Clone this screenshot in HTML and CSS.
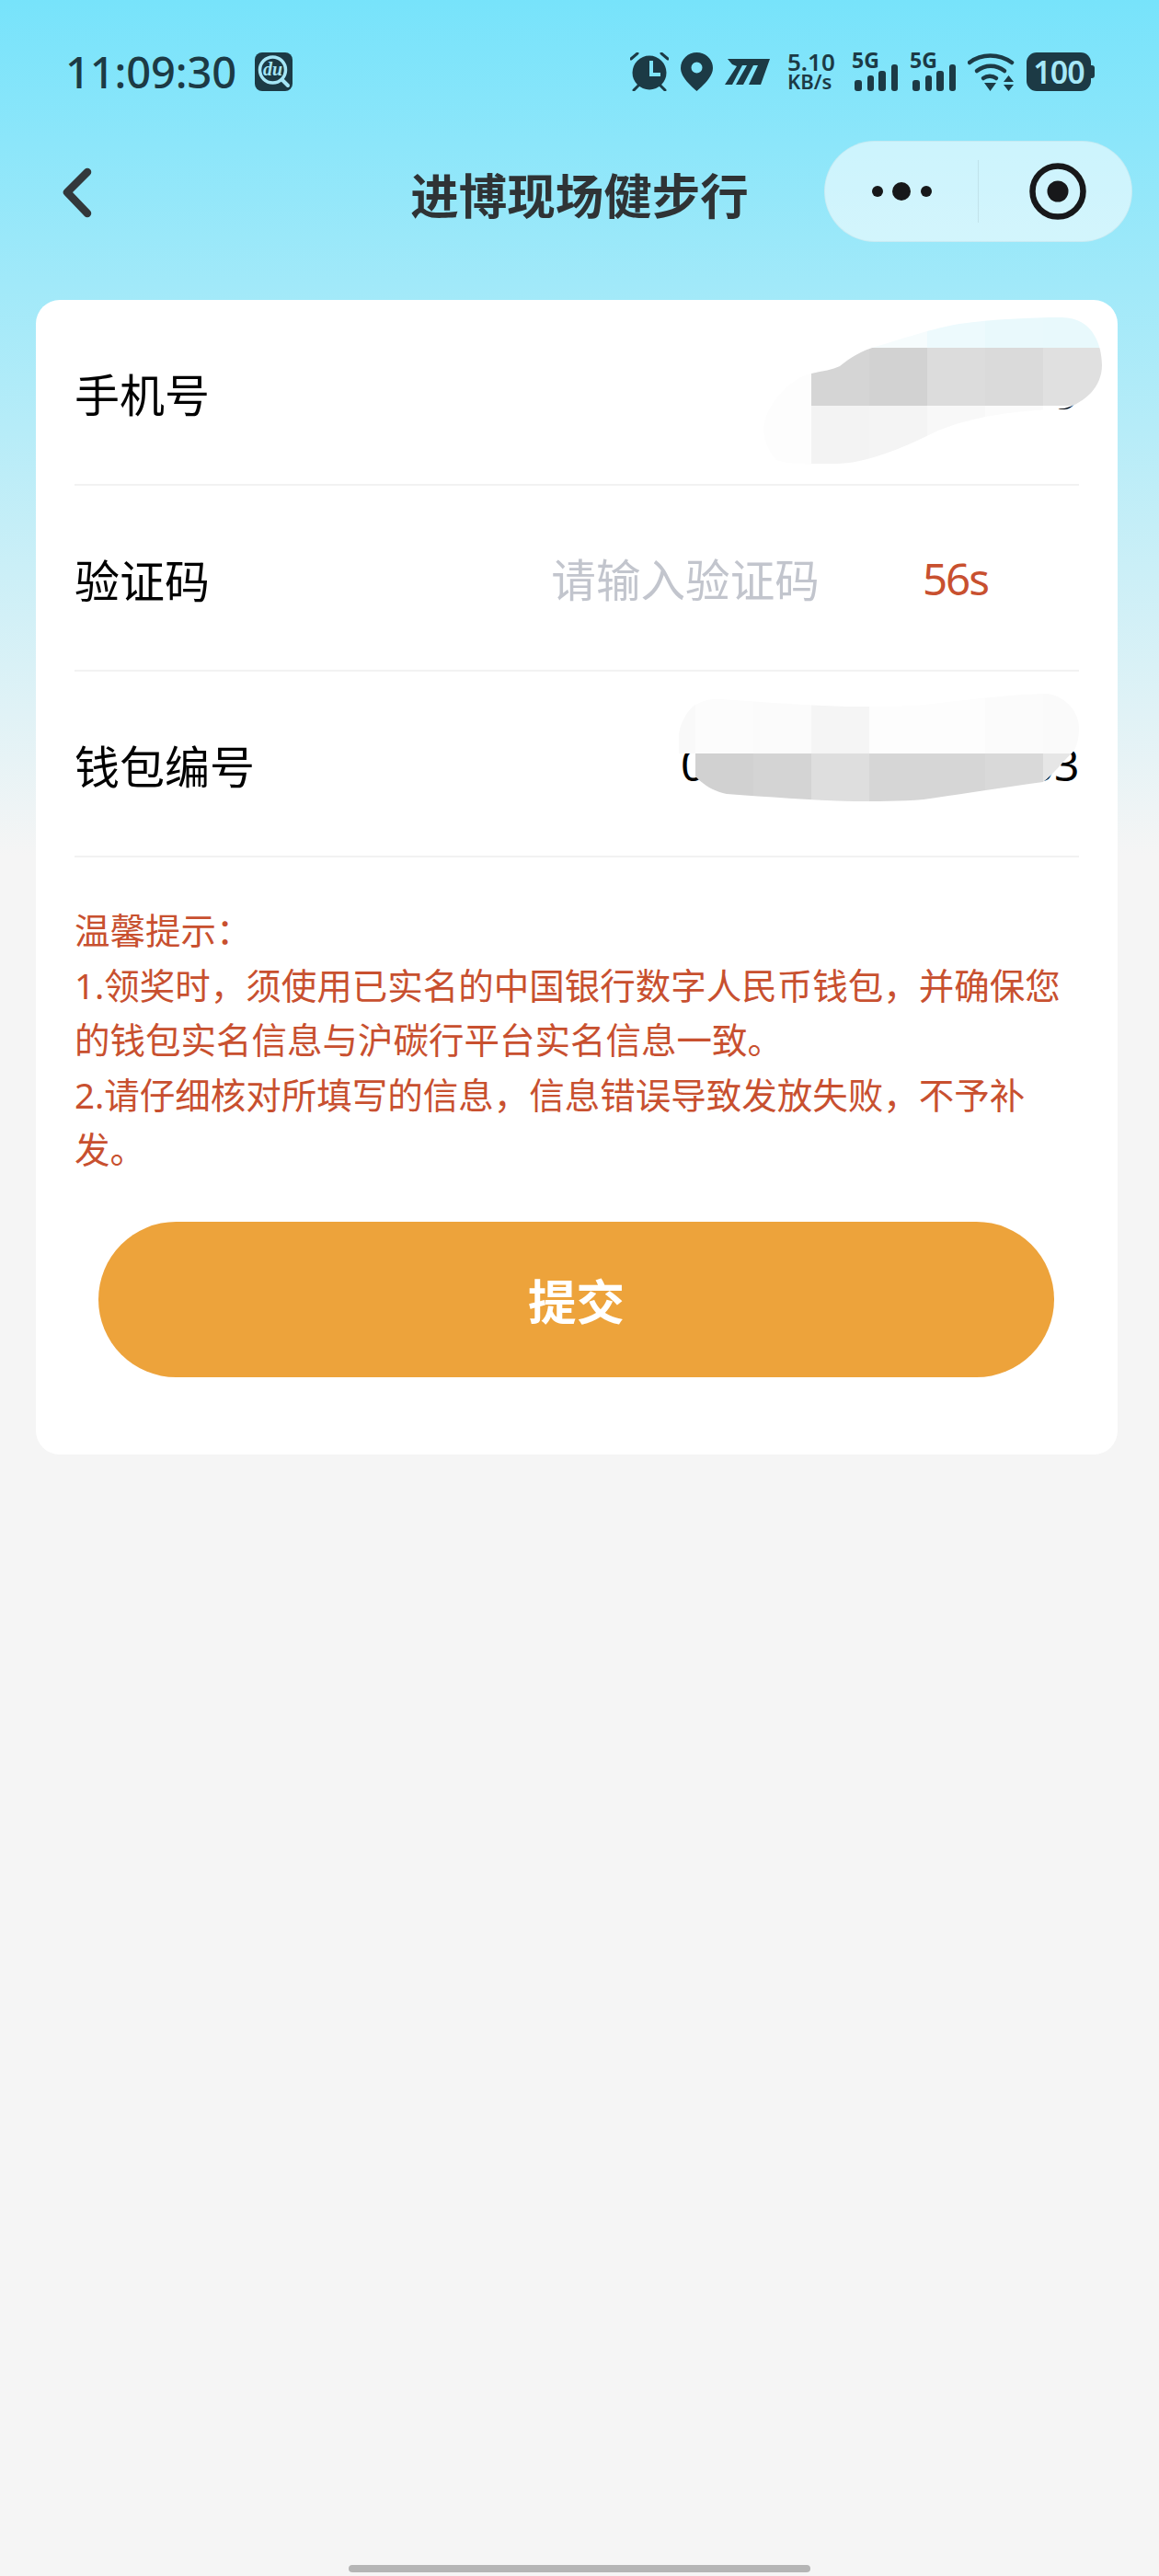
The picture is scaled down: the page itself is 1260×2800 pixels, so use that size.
FILE: index.html
```html
<!DOCTYPE html>
<html lang="zh-CN">
<head>
    <meta charset="UTF-8">
    <title>进博现场健步行</title>
    <link rel="stylesheet" href="styles.css">
</head>
<body>
    <div class="page">
        <div class="status-bar">
            <span class="time">11:09:30</span>
            <svg class="du-icon" width="41" height="42" viewBox="0 0 41 42">
                <rect width="41" height="42" rx="8" fill="#1c3a45"/>
                <circle cx="19.500" cy="19" r="14" fill="none" stroke="#a5e6f6" stroke-width="3.500"/>
                <path d="M30 30l6 6" stroke="#a5e6f6" stroke-width="4" stroke-linecap="round"/>
                <text x="19.500" y="25" text-anchor="middle" class="du-text">du</text>
            </svg>
            <div class="status-icons">
                <svg width="42" height="42" viewBox="0 0 42 42">
                    <circle cx="21" cy="22" r="18.500" fill="#1c3a45"/>
                    <path d="M23 9V24H33" fill="none" stroke="#7fe5fb" stroke-width="4"/>
                    <path d="M1 7L8 1M41 7L34 1M4 41L9 36M38 41L33 36" stroke="#1c3a45" stroke-width="3" stroke-linecap="round"/>
                </svg>
                <svg width="35" height="42" viewBox="0 0 35 42">
                    <path fill="#1c3a45" fill-rule="evenodd" d="M17.500 0C27 0 35 7.500 35 17C35 27 23 37 17.500 42C12 37 0 27 0 17C0 7.500 8 0 17.500 0ZM17.500 10.500a6 6 0 1 0 0 12a6 6 0 1 0 0-12Z"/>
                </svg>
                <svg width="49" height="28" viewBox="0 0 49 28">
                    <polygon fill="#1c3a45" points="3,0 49,0 39,28 26,28 36,7 31,7 20,28 12,28 24,7 19,7 8,28 0,28 13,8 8,6"/>
                </svg>
                <div class="speed">5.10<br>KB/s</div>
                <div class="signal">
                    <span class="net-text">5G</span>
                    <svg class="bars" width="50" height="42" viewBox="0 0 50 42">
                        <rect x="3" y="30" width="8" height="12" rx="3"/>
                        <rect x="17" y="25" width="7" height="17" rx="3"/>
                        <rect x="29" y="20" width="8" height="22" rx="3"/>
                        <rect x="43" y="13" width="7" height="29" rx="3"/>
                    </svg>
                </div>
                <div class="signal">
                    <span class="net-text">5G</span>
                    <svg class="bars" width="50" height="42" viewBox="0 0 50 42">
                        <rect x="3" y="30" width="8" height="12" rx="3"/>
                        <rect x="17" y="25" width="7" height="17" rx="3"/>
                        <rect x="29" y="20" width="8" height="22" rx="3"/>
                        <rect x="43" y="13" width="7" height="29" rx="3"/>
                    </svg>
                </div>
                <svg width="51" height="42" viewBox="0 0 51 42">
                    <g fill="none" stroke="#1c3a45" stroke-width="4.500" stroke-linecap="round">
                        <path d="M2 11C15 1 34 1 48 11"/>
                        <path d="M10 20C19 13 31 13 40 20"/>
                        <path d="M17 28C21 25 27 25 31 28"/>
                    </g>
                    <path fill="#1c3a45" d="M18 33H31L24.500 42ZM44.500 25L50 32H39ZM39 35H50L44.500 42Z"/>
                </svg>
                <div class="battery"><span class="battery-num">100</span></div>
            </div>
        </div>

        <div class="nav">
            <svg class="back" width="40" height="60" viewBox="0 0 40 60">
                <path d="M31 5L9 27L31 50" fill="none" stroke="#33383b" stroke-width="8.500" stroke-linecap="round" stroke-linejoin="round"/>
            </svg>
            <div class="nav-title">进博现场健步行</div>
            <div class="capsule">
                <div class="capsule-part">
                    <svg width="70" height="24" viewBox="0 0 70 24">
                        <circle cx="9" cy="12" r="6" fill="#17181a"/>
                        <circle cx="35" cy="12" r="10" fill="#17181a"/>
                        <circle cx="62" cy="12" r="6" fill="#17181a"/>
                    </svg>
                </div>
                <div class="capsule-part capsule-line">
                    <svg class="target" width="62" height="62" viewBox="0 0 62 62">
                        <circle cx="31" cy="31" r="27.500" fill="none" stroke="#17181a" stroke-width="6.500"/>
                        <circle cx="31" cy="31" r="11.500" fill="#17181a"/>
                    </svg>
                </div>
            </div>
        </div>

        <div class="card">
            <div class="row">
                <span class="row-label">手机号</span>
                <span class="row-value">00000000009</span>
            </div>
            <div class="row">
                <span class="row-label">验证码</span>
                <span class="row-value row-placeholder">请输入验证码</span>
                <span class="count">56s</span>
            </div>
            <div class="row">
                <span class="row-label">钱包编号</span>
                <span class="row-value">0000000000000003</span>
            </div>

            <div class="tips">
                <div>温馨提示：</div>
                <div>1.领奖时，须使用已实名的中国银行数字人民币钱包，并确保您的钱包实名信息与沪碳行平台实名信息一致。</div>
                <div>2.请仔细核对所填写的信息，信息错误导致发放失败，不予补发。</div>
            </div>

            <button class="submit" type="button">提交</button>

            <!-- 打码涂抹，坐标按整页算 -->
            <svg class="smear" width="1176" height="600" viewBox="39 326 1176 600">
                <defs>
                    <clipPath id="smear1">
                        <path d="M1154 345C1190 345 1198 378 1198 397C1198 420 1180 438 1157 444C1100 447 1060 452 1020 468C980 488 940 504 909 504C880 505 860 505 844 500C835 490 830 478 830 465C832 440 860 410 882 406C895 403 905 402 913 398C925 388 938 381 951 377C985 367 1010 358 1043 352C1080 347 1120 345 1154 345Z"/>
                    </clipPath>
                    <clipPath id="smear3">
                        <path d="M756 766C765 761 772 760 783 760C830 763 880 767 920 768C950 768 980 768 1004 766C1050 761 1095 755 1138 754C1160 757 1173 775 1173 791C1173 805 1170 814 1165 819C1155 828 1145 842 1134 850C1090 856 1040 864 1004 869C980 871 950 871 928 871C880 870 835 866 790 863C775 860 765 853 756 844V819H738V798C740 785 747 772 756 766Z"/>
                    </clipPath>
                </defs>
                <g clip-path="url(#smear1)">
                    <rect x="820" y="340" width="62" height="170" fill="#fdfdfd"/>
                    <rect x="882" y="340" width="63" height="38" fill="#ffffff"/>
                    <rect x="945" y="340" width="63" height="38" fill="#f6fcfd"/>
                    <rect x="1008" y="340" width="63" height="38" fill="#edfafd"/>
                    <rect x="1071" y="340" width="63" height="38" fill="#e9f9fc"/>
                    <rect x="1134" y="340" width="64" height="38" fill="#e8f9fc"/>
                    <rect x="882" y="378" width="63" height="63" fill="#d5d5d5"/>
                    <rect x="945" y="378" width="63" height="63" fill="#d2d2d2"/>
                    <rect x="1008" y="378" width="63" height="63" fill="#dcdcdc"/>
                    <rect x="1071" y="378" width="63" height="63" fill="#dadada"/>
                    <rect x="1134" y="378" width="64" height="63" fill="#e0e0e0"/>
                    <rect x="882" y="441" width="63" height="63" fill="#f3f3f3"/>
                    <rect x="945" y="441" width="63" height="63" fill="#f4f4f4"/>
                    <rect x="1008" y="441" width="63" height="63" fill="#f8f8f8"/>
                    <rect x="1071" y="441" width="63" height="63" fill="#fbfbfb"/>
                    <rect x="1134" y="441" width="64" height="63" fill="#ffffff"/>
                </g>
                <g clip-path="url(#smear3)">
                    <rect x="730" y="750" width="26" height="90" fill="#f9f9f9"/>
                    <rect x="756" y="750" width="63" height="69" fill="#fcfcfc"/>
                    <rect x="819" y="750" width="63" height="69" fill="#fbfbfb"/>
                    <rect x="882" y="750" width="63" height="69" fill="#f5f5f5"/>
                    <rect x="945" y="750" width="63" height="69" fill="#fdfdfd"/>
                    <rect x="1008" y="750" width="63" height="69" fill="#fdfdfd"/>
                    <rect x="1071" y="750" width="63" height="69" fill="#fbfbfb"/>
                    <rect x="1134" y="750" width="63" height="69" fill="#fafafa"/>
                    <rect x="756" y="819" width="63" height="63" fill="#d1d1d1"/>
                    <rect x="819" y="819" width="63" height="63" fill="#d4d4d4"/>
                    <rect x="882" y="819" width="63" height="63" fill="#dedede"/>
                    <rect x="945" y="819" width="63" height="63" fill="#d6d6d6"/>
                    <rect x="1008" y="819" width="63" height="63" fill="#d6d6d6"/>
                    <rect x="1071" y="819" width="63" height="63" fill="#d9d9d9"/>
                    <rect x="1134" y="819" width="63" height="63" fill="#e6e6e6"/>
                </g>
            </svg>
        </div>

        <div class="home-bar"></div>
    </div>
</body>
</html>
```

FILE: styles.css
```css
* {
    margin: 0;
    padding: 0;
    box-sizing: border-box;
}
body {
    background: #f5f5f5;
    font-family: "Noto Sans", "Noto Sans CJK SC", sans-serif;
}
.page {
    height: 2800px;
    display: flex;
    flex-direction: column;
    overflow: hidden;
    background: linear-gradient(#77e3fb, #f5f5f5 930px);
}

/* status bar */
.status-bar {
    display: flex;
    align-items: center;
    height: 42px;
    margin-top: 57px;
    padding: 0 70px 0 71px;
    color: #1c3a45;
}
.time {
    font-size: 47px;
    font-weight: 500;
    line-height: 42px;
    letter-spacing: -0.1px;
}
.du-icon {
    margin-left: 20px;
}
.du-text {
    font-family: "Liberation Serif", serif;
    font-style: italic;
    font-weight: 700;
    font-size: 20px;
    fill: #a5e6f6;
}
.status-icons {
    display: flex;
    align-items: center;
    gap: 13px;
    margin-left: auto;
}
.speed {
    width: 51px;
    margin: 0 6px;
    font-size: 22px;
    font-weight: 600;
    line-height: 21px;
    white-space: nowrap;
}
.speed::first-line {
    font-size: 26px;
}
.signal {
    position: relative;
    width: 50px;
    height: 42px;
}
.net-text {
    position: absolute;
    left: 0;
    top: -3px;
    font-size: 23px;
    font-weight: 700;
    line-height: 22px;
}
.bars {
    display: block;
    fill: #1c3a45;
}
.battery {
    position: relative;
    width: 70px;
    height: 42px;
    margin-right: 4px;
    border-radius: 11px;
    background: #1c3a45;
    color: #a6e8f8;
    text-align: center;
}
.battery::after {
    content: "";
    position: absolute;
    right: -4px;
    top: 14px;
    width: 4px;
    height: 14px;
    border-radius: 0 3px 3px 0;
    background: #1c3a45;
}
.battery-num {
    font-size: 34px;
    font-weight: 600;
    line-height: 42px;
    letter-spacing: -1px;
}

/* title bar */
.nav {
    display: grid;
    grid-template-columns: 1fr auto 1fr;
    align-items: center;
    height: 110px;
    margin-top: 54px;
    padding: 0 29px 0 64px;
}
.back {
    margin-top: 8px;
}
.nav-title {
    padding: 3px 0 0;
    margin-left: -35px;
    font-size: 52.5px;
    font-weight: 700;
    color: #2f3335;
    white-space: nowrap;
}
.capsule {
    justify-self: end;
    display: flex;
    align-items: center;
    width: 335px;
    height: 110px;
    border: 1px solid rgba(0, 0, 0, 0.04);
    border-radius: 55px;
    background: rgba(255, 255, 255, 0.56);
}
.capsule-part {
    flex: 1;
    display: flex;
    align-items: center;
    justify-content: center;
    height: 68px;
}
.capsule-line {
    border-left: 1px solid rgba(0, 0, 0, 0.07);
}
.target {
    margin-left: 5px;
}

/* form card */
.card {
    position: relative;
    margin: 63px 45px 0 39px;
    padding: 0 42px 84px;
    border-radius: 26px;
    background: #fff;
}
.row {
    display: flex;
    align-items: center;
    height: 202px;
    border-bottom: 2px solid #f2f2f2;
    font-size: 48px;
    color: #000;
}
.row-label {
    font-size: 49px;
}
.row-value {
    margin-left: auto;
    letter-spacing: -0.4px;
}
.row-placeholder {
    font-size: 48.6px;
    letter-spacing: 0;
    color: #c2c5cd;
}
.count {
    margin: 0 99px 0 112px;
    font-size: 47.5px;
    letter-spacing: -2px;
    color: #c8502f;
}
.tips {
    margin-top: 50px;
    font-size: 38.5px;
    line-height: 59.5px;
    color: #c8502f;
}
.submit {
    display: block;
    width: 1039px;
    height: 169px;
    margin: 48px 0 0 26px;
    border: none;
    border-radius: 85px;
    background: #eda33b;
    color: #fff;
    font-family: "Noto Sans", "Noto Sans CJK SC", sans-serif;
    font-size: 52.5px;
    font-weight: 700;
}
.smear {
    position: absolute;
    left: 0;
    top: 0;
}

.home-bar {
    align-self: center;
    width: 502px;
    height: 8px;
    margin-top: auto;
    margin-bottom: 4px;
    border-radius: 4px;
    background: #b5b5b5;
}
```
